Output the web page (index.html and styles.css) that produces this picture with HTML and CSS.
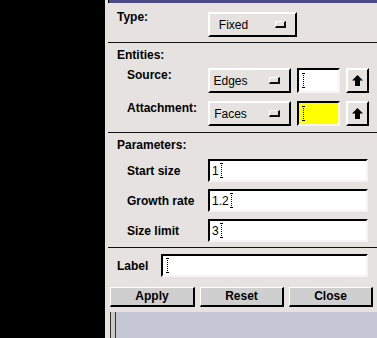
FILE: index.html
```html
<!DOCTYPE html>
<html lang="en">
<head>
  <meta charset="UTF-8">
  <title>Mesh Size Panel</title>
  <link rel="stylesheet" href="styles.css">
</head>
<body>

  <div class="side"></div>

  <div class="main">
    <div class="panel">
      <div class="topbar"></div>

      <!-- type -->
      <div class="sec sec-type">
        <div class="row row-top">
          <div class="lbl head">Type:</div>
          <div class="menubtn menubtn-wide"><span class="mb-text">Fixed</span><span class="ind"></span></div>
        </div>
      </div>

      <div class="divider"></div>

      <!-- entities -->
      <div class="sec sec-ent">
        <div class="head heading">Entities:</div>
        <div class="row row-top row-ent">
          <div class="lbl sub">Source:</div>
          <div class="menubtn"><span class="mb-text">Edges</span><span class="ind"></span></div>
          <div class="entry entry-small"><span class="cursor"></span></div>
          <div class="arrowbtn">
            <svg width="11" height="11" viewBox="0 0 11 11"><polygon points="5.5,0 11,5.5 8,5.5 8,11 3,11 3,5.5 0,5.5" fill="#000"/></svg>
          </div>
        </div>
        <div class="row row-top row-ent row-att">
          <div class="lbl sub">Attachment:</div>
          <div class="menubtn"><span class="mb-text">Faces</span><span class="ind"></span></div>
          <div class="entry entry-small entry-yellow"><span class="cursor"></span></div>
          <div class="arrowbtn">
            <svg width="11" height="11" viewBox="0 0 11 11"><polygon points="5.5,0 11,5.5 8,5.5 8,11 3,11 3,5.5 0,5.5" fill="#000"/></svg>
          </div>
        </div>
      </div>

      <div class="divider"></div>

      <!-- parameters -->
      <div class="sec sec-par">
        <div class="head heading">Parameters:</div>
        <div class="row row-par">
          <div class="lbl sub">Start size</div>
          <div class="entry entry-wide">1<span class="cursor"></span></div>
        </div>
        <div class="row row-par">
          <div class="lbl sub">Growth rate</div>
          <div class="entry entry-wide">1.2<span class="cursor"></span></div>
        </div>
        <div class="row row-par">
          <div class="lbl sub">Size limit</div>
          <div class="entry entry-wide">3<span class="cursor"></span></div>
        </div>
      </div>

      <div class="divider"></div>

      <!-- label + buttons -->
      <div class="sec sec-label">
        <div class="row row-label">
          <div class="head label-lbl">Label</div>
          <div class="entry entry-label"><span class="cursor"></span></div>
        </div>
        <div class="actions">
          <div class="btn">Apply</div>
          <div class="btn">Reset</div>
          <div class="btn">Close</div>
        </div>
      </div>
    </div>

    <div class="lower">
      <div class="rail"></div>
      <div class="view"></div>
    </div>
  </div>

</body>
</html>
```

FILE: styles.css
```css
html, body {
  margin: 0;
  height: 338px;
  overflow: hidden;
}

body {
  background: #000;
  display: flex;
  font-family: "Liberation Sans", Arial, sans-serif;
  font-size: 12px;
  line-height: 14px;
  color: #000;
}

.side {
  width: 105px;
  flex: none;
}

.main {
  flex: 1;
  display: flex;
  flex-direction: column;
  background: #e6e2e0;
}

.panel {
  height: 312px;
  overflow: hidden;
}

.topbar {
  height: 3px;
  margin-left: 3px;
  border-left: 1px solid #000;
  background: #4c4a84;
}

.divider {
  height: 1px;
  margin-left: 3px;
  background: #111;
}

.row {
  display: flex;
  align-items: center;
}

.row-top {
  align-items: flex-start;
}

.head {
  font-weight: bold;
}

.lbl {
  width: 103px;
  flex: none;
  box-sizing: border-box;
}

.lbl.head {
  padding-left: 12px;
}

.lbl.sub {
  padding-left: 22px;
  font-weight: bold;
}

.heading {
  padding-left: 12px;
  margin-top: 5px;
}

/* sections */
.sec-type {
  padding: 7px 0 5px;
}

.sec-type .menubtn {
  margin-top: 2px;
}

.sec-ent {
  padding-bottom: 6px;
}

.row-ent {
  margin-top: 6px;
}

.row-att {
  margin-top: 8px;
}

.sec-par {
  padding-bottom: 5px;
}

.row-par {
  margin-top: 7px;
}

/* menubutton */
.menubtn {
  width: 83px;
  height: 25px;
  box-sizing: border-box;
  display: flex;
  align-items: center;
  border: 2px solid;
  border-color: #fff #000 #000 #fff;
  padding-right: 9px;
}

.menubtn-wide {
  width: 89px;
}

.mb-text {
  flex: 1;
  text-align: center;
  padding-right: 18px;
}

.ind {
  width: 11px;
  height: 7px;
  box-sizing: border-box;
  border: 1px solid;
  border-color: #fff #111 #111 #fff;
  border-bottom-width: 2px;
  border-right-width: 2px;
  background: #e6e2e0;
}

/* entries */
.entry {
  height: 23px;
  box-sizing: border-box;
  background: #fff;
  border: 2px solid;
  border-color: #000 #f4f4f4 #f4f4f4 #000;
  display: flex;
  align-items: center;
  padding-left: 2px;
}

.entry-small {
  width: 43px;
  height: 25px;
  margin-left: 6px;
}

.entry-yellow {
  background: #ffff00;
}

.entry-wide {
  width: 160px;
}

.cursor {
  width: 5px;
  height: 15px;
  background:
    linear-gradient(#000, #000) 1px 0 / 3px 1px no-repeat,
    linear-gradient(#000, #000) 1px 14px / 3px 1px no-repeat,
    repeating-linear-gradient(#000 0 1px, transparent 1px 2px) 2px 0 / 1px 15px no-repeat;
}

/* arrow button */
.arrowbtn {
  width: 23px;
  height: 25px;
  box-sizing: border-box;
  margin-left: 6px;
  border: 2px solid;
  border-color: #fff #000 #000 #fff;
  display: flex;
  align-items: center;
  justify-content: center;
}

/* label + actions */
.row-label {
  margin-top: 6px;
}

.label-lbl {
  width: 56px;
  padding-left: 12px;
  box-sizing: border-box;
}

.entry-label {
  width: 207px;
}

.actions {
  display: grid;
  grid-template-columns: 85px 84px 84px;
  gap: 5px;
  padding-left: 5px;
  margin-top: 10px;
}

.btn {
  height: 20px;
  box-sizing: border-box;
  background: #cfcfcf;
  border: 2px solid;
  border-color: #fff #000 #000 #fff;
  border-top-width: 1px;
  border-left-width: 1px;
  font-weight: bold;
  text-align: center;
  line-height: 17px;
}

/* lower strip */
.lower {
  flex: 1;
  display: flex;
  padding-left: 5px;
}

.rail {
  width: 4px;
  background: #c9c9c9;
  border-left: 1px solid #333;
  border-right: 1px solid #333;
}

.view {
  flex: 1;
  background: #c4c6d4;
}
```
